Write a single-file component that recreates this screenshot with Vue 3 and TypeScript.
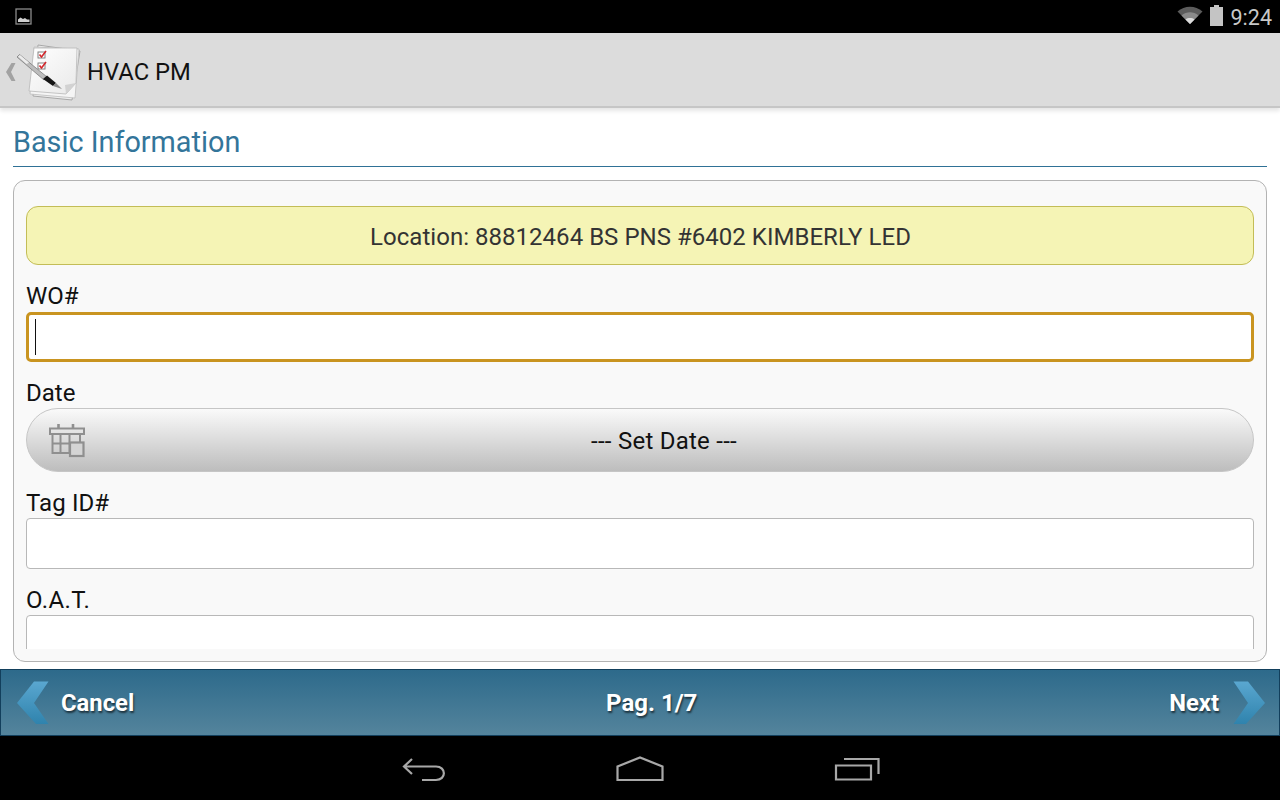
<script setup lang="ts">
const labelTag: string = 'Tag ID#'
</script>

<template>
  <div class="screen">
    <div class="status">
      <svg class="pic" width="18" height="18" viewBox="0 0 18 18">
        <rect x="1" y="1" width="15" height="15" fill="none" stroke="#8a8a8a" stroke-width="1.3" />
        <path d="M3 14V11.5L5.5 9.5L8 11L10 10L12 11.5L14.5 11.5V14Z" fill="#d0d0d0" />
      </svg>
      <div class="status-right">
        <svg width="26" height="18" viewBox="0 0 26 18">
          <path d="M0.5 5.5C7.5 -0.8 18.5 -0.8 25.5 5.5L13 18Z" fill="#5c5c5c" />
          <path d="M4.5 9.5C9.5 5.3 16.5 5.3 21.5 9.5L13 18Z" fill="#8a8a8a" />
          <path d="M8.5 13.5C11 11.6 15 11.6 17.5 13.5L13 18Z" fill="#dcdcdc" />
        </svg>
        <svg class="battery" width="15" height="21" viewBox="0 0 15 21">
          <path d="M5 0H10V2H14V21H1V2H5Z" fill="#c4c4c4" />
        </svg>
        <span class="clock">9:24</span>
      </div>
    </div>

    <header class="appbar">
      <svg class="chev" width="12" height="20" viewBox="0 0 12 20">
        <path d="M6.5 1H10.5L6 10L10.5 19H6.5L1 10Z" fill="#a2a2a2" />
      </svg>
      <svg class="logo" width="68" height="62" viewBox="0 0 68 62">
        <defs>
          <linearGradient id="sheet" x1="0" y1="0" x2="1" y2="1">
            <stop offset="0" stop-color="#ffffff" />
            <stop offset="1" stop-color="#e9e9e9" />
          </linearGradient>
        </defs>
        <path d="M24 4L66 10L58 59L19 55Z" fill="#ededed" stroke="#a8a8a8" stroke-width="1" />
        <path d="M20 6L65 8L61 57L16 53Z" fill="#f5f5f5" stroke="#bcbcbc" stroke-width="0.8" />
        <path d="M20 7H63L62 42L52 53L15 50Z" fill="url(#sheet)" stroke="#b8b8b8" stroke-width="0.8" />
        <path d="M62 42L51 44L52 53Z" fill="#d2d2d2" />
        <rect x="24" y="11" width="7" height="6" fill="#fff" stroke="#777" stroke-width="0.9" />
        <path d="M25.5 13.5L27.5 16L32 10" fill="none" stroke="#d3272b" stroke-width="1.6" />
        <rect x="24" y="22" width="7" height="6" fill="#fff" stroke="#777" stroke-width="0.9" />
        <path d="M25.5 24.5L27.5 27L32 21" fill="none" stroke="#d3272b" stroke-width="1.6" />
        <path d="M3 16L5.5 13.5L33 36L30 39Z" fill="#bcbcbc" stroke="#7d7d7d" stroke-width="0.8" />
        <path d="M4 15.5L6 14L15 21.5L12.5 23Z" fill="#ececec" />
        <path d="M29 38L33 34.5L42 42L39 45Z" fill="#161616" />
        <path d="M39 45L42 42L48 48Z" fill="#8b8b8b" />
      </svg>
      <h1 class="apptitle">HVAC PM</h1>
    </header>

    <main class="page">
      <h2 class="section">Basic Information</h2>
      <section class="card">
        <div class="scroller">
          <div class="location">Location: 88812464 BS PNS #6402 KIMBERLY LED</div>

          <label class="label label-wo">WO#</label>
          <div class="input focused"><span class="caret"></span></div>

          <label class="label label-date">Date</label>
          <button class="date" type="button">
            <svg class="cal" width="38" height="36" viewBox="0 0 38 36">
              <g fill="none" stroke="#8f8f8f" stroke-width="2">
                <path d="M1 5.5H35V11H1Z" />
                <path stroke-width="2.6" d="M9.5 5V1M24 5V1" />
                <path d="M3.5 11V30H20M31 11V19" />
                <path d="M3.5 20.5H20M11.5 11V30M20.5 11V30" />
              </g>
              <rect x="21" y="19.5" width="13.5" height="13.5" fill="#d4d4d4" stroke="#8f8f8f" stroke-width="2.2" />
            </svg>
            <span class="date-text">--- Set Date ---</span>
          </button>

          <label class="label label-tag">{{ labelTag }}</label>
          <div class="input plain"></div>

          <label class="label label-oat">O.A.T.</label>
          <div class="input plain"></div>
        </div>
      </section>
    </main>

    <footer class="toolbar">
      <div class="tool tool-left">
        <svg width="36" height="44" viewBox="0 0 36 44">
          <defs>
            <linearGradient id="arrowL" x1="0" y1="0" x2="0" y2="1">
              <stop offset="0" stop-color="#5aa7d0" />
              <stop offset="1" stop-color="#2f83ad" />
            </linearGradient>
          </defs>
          <path d="M18 0.5H32.5L18 22L32.5 43H20L1 22Z" fill="url(#arrowL)" />
        </svg>
        <span class="tool-text">Cancel</span>
      </div>
      <span class="tool-text pager">Pag. 1/7</span>
      <div class="tool tool-right">
        <span class="tool-text">Next</span>
        <svg width="36" height="44" viewBox="0 0 36 44">
          <path d="M18 0.5H3.5L18 22L3.5 43H16L35 22Z" fill="url(#arrowL)" />
        </svg>
      </div>
    </footer>

    <nav class="navbar">
      <svg width="46" height="26" viewBox="0 0 46 26">
        <path d="M12 3L4 10.5L12 18M4 10.5H36C46.5 10.5 46.5 24 36 24H22" fill="none" stroke="#a8a8a8" stroke-width="2.2" />
      </svg>
      <svg width="48" height="26" viewBox="0 0 48 26">
        <path d="M1.5 24V10.5L24 1.5L46.5 10.5V24Z" fill="none" stroke="#a8a8a8" stroke-width="2.2" />
      </svg>
      <svg width="46" height="24" viewBox="0 0 46 24">
        <path d="M2 8.5H37V22.5H2Z" fill="none" stroke="#a8a8a8" stroke-width="2.2" />
        <path d="M10 2H44.5V17" fill="none" stroke="#a8a8a8" stroke-width="2.2" />
      </svg>
    </nav>
  </div>
</template>

<style>
html,
body {
  margin: 0;
  background: #000;
}
</style>

<style scoped>
.screen {
  width: 1280px;
  height: 800px;
  display: flex;
  flex-direction: column;
  overflow: hidden;
  background: #fff;
  font-family: Roboto, "Liberation Sans", sans-serif;
  color: #111;
}
.status {
  height: 33px;
  flex: none;
  background: #000;
  display: flex;
  align-items: center;
  justify-content: space-between;
  padding: 0 8px 0 15px;
}
.pic {
  margin-top: 1px;
}
.status-right {
  display: flex;
  align-items: center;
  gap: 6px;
  margin-top: -3px;
}
.clock {
  color: #c8c8c8;
  font-size: 21.5px;
  line-height: 33px;
  margin-top: 5px;
  margin-left: 1px;
}
.appbar {
  height: 75px;
  flex: none;
  box-sizing: border-box;
  background: #dcdcdc;
  border-bottom: 2px solid #c6c6c6;
  box-shadow: 0 3px 4px rgba(0, 0, 0, 0.1);
  display: flex;
  align-items: center;
  padding: 5px 0 0 5px;
}
.chev {
  flex: none;
}
.logo {
  flex: none;
  margin: 0 0 0 -3px;
}
.apptitle {
  margin: 0 0 0 5px;
  font-size: 23.8px;
  font-weight: 400;
  color: #111;
}
.page {
  flex: 1;
  min-height: 0;
  padding: 0 13px;
  display: flex;
  flex-direction: column;
}
.section {
  margin: 0;
  height: 59px;
  flex: none;
  box-sizing: border-box;
  padding-top: 16px;
  line-height: 36px;
  font-size: 28.8px;
  font-weight: 400;
  color: #33759a;
  border-bottom: 1px solid #2f7196;
}
.card {
  margin-top: 13px;
  height: 482px;
  flex: none;
  box-sizing: border-box;
  border: 1px solid #b3b3b3;
  border-radius: 12px;
  background: #f9f9f9;
  padding: 25px 12px 12px;
}
.scroller {
  height: 443px;
  overflow: hidden;
  display: flex;
  flex-direction: column;
}
.location {
  height: 59px;
  flex: none;
  box-sizing: border-box;
  border: 1px solid #c3bd57;
  border-radius: 12px;
  background: #f5f4b5;
  color: #333;
  font-size: 24px;
  letter-spacing: 0.03px;
  padding: 3px 0 0 1px;
  display: flex;
  align-items: center;
  justify-content: center;
}
.label {
  display: block;
  flex: none;
  font-size: 24px;
  line-height: 30px;
  color: #111;
}
.label-wo {
  margin-top: 16px;
  margin-bottom: 1px;
}
.label-date {
  margin-top: 16px;
}
.label-tag {
  margin-top: 16px;
  letter-spacing: 0.1px;
}
.label-oat {
  margin-top: 16px;
  letter-spacing: 0.4px;
}
.input {
  flex: none;
  box-sizing: border-box;
  background: #fff;
  border-radius: 4px;
}
.focused {
  height: 50px;
  border: 3px solid #c99420;
  border-radius: 5px;
  display: flex;
  align-items: center;
  padding-left: 6px;
}
.caret {
  width: 1px;
  height: 36px;
  background: #111;
}
.plain {
  height: 51px;
  border: 1px solid #b8b8b8;
}
.date {
  position: relative;
  flex: none;
  height: 64px;
  box-sizing: border-box;
  border: 1px solid #c6c6c6;
  border-radius: 32px;
  background: linear-gradient(#fafafa, #bdbdbd);
  font-family: inherit;
  font-size: 24px;
  color: #111;
  display: flex;
  align-items: center;
  justify-content: center;
  padding: 1px 0 0 48px;
}
.date-text {
  letter-spacing: 0.25px;
}
.cal {
  position: absolute;
  left: 22px;
  top: 14px;
}
.toolbar {
  height: 67px;
  flex: none;
  box-sizing: border-box;
  margin-top: 7px;
  border: 1px solid #123f5c;
  background: linear-gradient(#2d6a8b, #54849c);
  display: flex;
  align-items: center;
  justify-content: space-between;
  padding: 0 13px 0 15px;
}
.tool {
  display: flex;
  align-items: center;
}
.tool-left {
  gap: 9px;
}
.tool-right {
  gap: 11px;
}
.tool-text {
  color: #fff;
  font-size: 23.8px;
  font-weight: 700;
  padding-top: 1px;
  text-shadow: 1px 2px 2px rgba(0, 0, 0, 0.6);
}
.pager {
  font-size: 24px;
}
.navbar {
  height: 64px;
  flex: none;
  background: #000;
  display: flex;
  align-items: center;
  justify-content: center;
  gap: 170px;
  padding-top: 2px;
  box-sizing: border-box;
}
</style>
